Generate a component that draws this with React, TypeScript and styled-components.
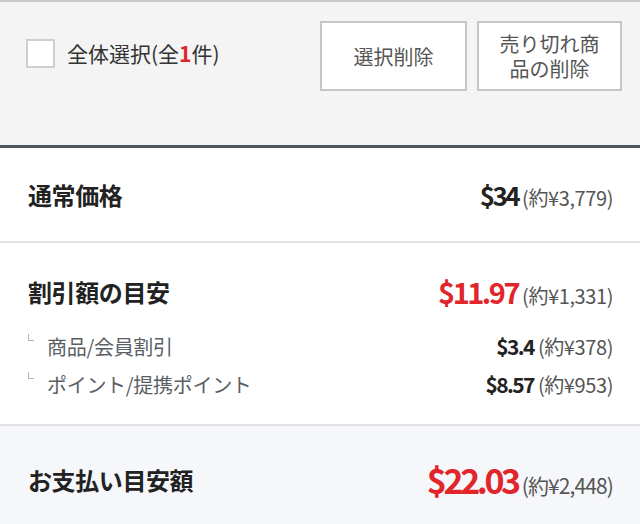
import React from "react";
import styled, { createGlobalStyle } from "styled-components";

const Global = createGlobalStyle`
  html, body { margin: 0; padding: 0; background: #ffffff; }
  body { font-family: "Noto Sans CJK JP", "Noto Sans", sans-serif; color: #222; }
`;

const Page = styled.div`
  width: 640px;
  height: 524px;
  overflow: hidden;
  display: flex;
  flex-direction: column;
`;

const Header = styled.div`
  display: flex;
  align-items: flex-start;
  justify-content: space-between;
  padding: 19px 18px 0 26px;
  background: #f4f4f4;
  border-top: 2px solid #c9c9c9;
  border-bottom: 3px solid #50575c;
  box-sizing: content-box;
  height: 124px;
`;

const SelectAll = styled.label`
  display: flex;
  align-items: center;
  gap: 12px;
  height: 70px;
  margin-top: -3px;
  font-size: 21px;
  color: #333;
  letter-spacing: 0;
`;

const CheckBox = styled.span`
  width: 25px;
  height: 25px;
  background: #fff;
  border: 2px solid #cfcfcf;
  display: inline-block;
`;

const Count = styled.b`
  color: #e0252b;
  font-weight: 700;
`;

const Buttons = styled.div`
  display: flex;
  gap: 10px;
`;

const Btn = styled.button<{ $w: number }>`
  width: ${(p) => p.$w}px;
  height: 70px;
  background: #fff;
  border: 2px solid #c6c6c6;
  font-family: "Noto Sans CJK JP", sans-serif;
  font-size: 20px;
  line-height: 25px;
  color: #555;
  padding: 0 10px;
  display: flex;
  flex-direction: column;
  align-items: center;
  justify-content: center;
  text-align: center;
`;

const Section = styled.div`
  display: flex;
  flex-direction: column;
  padding: 0 27px 0 28px;
  background: #fff;
  border-bottom: 2px solid #e2e2e4;
`;

const MainRow = styled.div<{ $h: number }>`
  display: flex;
  align-items: center;
  justify-content: space-between;
  height: ${(p) => p.$h}px;
`;

const Title = styled.div`
  font-size: 24px;
  font-weight: 700;
  color: #222;
  letter-spacing: -0.4px;
`;

const Price = styled.div`
  display: flex;
  align-items: baseline;
  gap: 4px;
`;

const Amount = styled.span<{ $size: number; $ls: number; $red?: boolean }>`
  font-size: ${(p) => p.$size}px;
  font-weight: 700;
  color: ${(p) => (p.$red ? "#e0252b" : "#222")};
  letter-spacing: ${(p) => p.$ls}px;
`;

const Yen = styled.span<{ $size?: number; $ls?: number }>`
  font-size: ${(p) => p.$size || 20}px;
  color: #555;
  letter-spacing: ${(p) => (p.$ls ?? -0.4)}px;
`;

const Discount = styled.div`
  display: flex;
  flex-direction: column;
  padding: 31px 27px 21px 28px;
  border-bottom: 2px solid #e2e2e4;
`;

const SubList = styled.div`
  display: flex;
  flex-direction: column;
  margin-top: 19px;
`;

const SubRow = styled.div`
  display: flex;
  align-items: center;
  justify-content: space-between;
  height: 38px;
`;

const SubLabel = styled.div`
  display: flex;
  align-items: center;
  font-size: 20px;
  color: #5a5f66;
  letter-spacing: -0.3px;
`;

const Corner = styled.span`
  width: 5px;
  height: 6px;
  border-left: 1px solid #b5b5b5;
  border-bottom: 1px solid #b5b5b5;
  margin: 2px 13px 0 0;
  align-self: flex-start;
`;

const Total = styled.div`
  flex: 1;
  background: #f5f7fa;
  padding: 33px 27px 0 28px;
`;

export default function App() {
  return (
    <Page>
      <Global />
      <Header>
        <SelectAll>
          <CheckBox />
          <span>
            全体選択(全<Count>1</Count>件)
          </span>
        </SelectAll>
        <Buttons>
          <Btn $w={147}>選択削除</Btn>
          <Btn $w={145}>
            <span>売り切れ商</span>
            <span>品の削除</span>
          </Btn>
        </Buttons>
      </Header>
      <Section>
        <MainRow $h={93}>
          <Title>通常価格</Title>
          <Price>
            <Amount $size={26} $ls={-2.6}>$34</Amount>
            <Yen>(約¥3,779)</Yen>
          </Price>
        </MainRow>
      </Section>
      <Discount>
        <MainRow $h={34}>
          <Title>割引額の目安</Title>
          <Price>
            <Amount $size={29} $ls={-2.5} $red>
              $11.97
            </Amount>
            <Yen>(約¥1,331)</Yen>
          </Price>
        </MainRow>
        <SubList>
          <SubRow>
            <SubLabel>
              <Corner />
              商品/会員割引
            </SubLabel>
            <Price>
              <Amount $size={21} $ls={-1.6}>$3.4</Amount>
              <Yen>(約¥378)</Yen>
            </Price>
          </SubRow>
          <SubRow>
            <SubLabel>
              <Corner />
              ポイント/提携ポイント
            </SubLabel>
            <Price>
              <Amount $size={21} $ls={-1.6}>$8.57</Amount>
              <Yen>(約¥953)</Yen>
            </Price>
          </SubRow>
        </SubList>
      </Discount>
      <Total>
        <MainRow $h={40}>
          <Title>お支払い目安額</Title>
          <Price>
            <Amount $size={34} $ls={-3.4} $red>
              $22.03
            </Amount>
            <Yen $size={21} $ls={-0.9}>(約¥2,448)</Yen>
          </Price>
        </MainRow>
      </Total>
    </Page>
  );
}
